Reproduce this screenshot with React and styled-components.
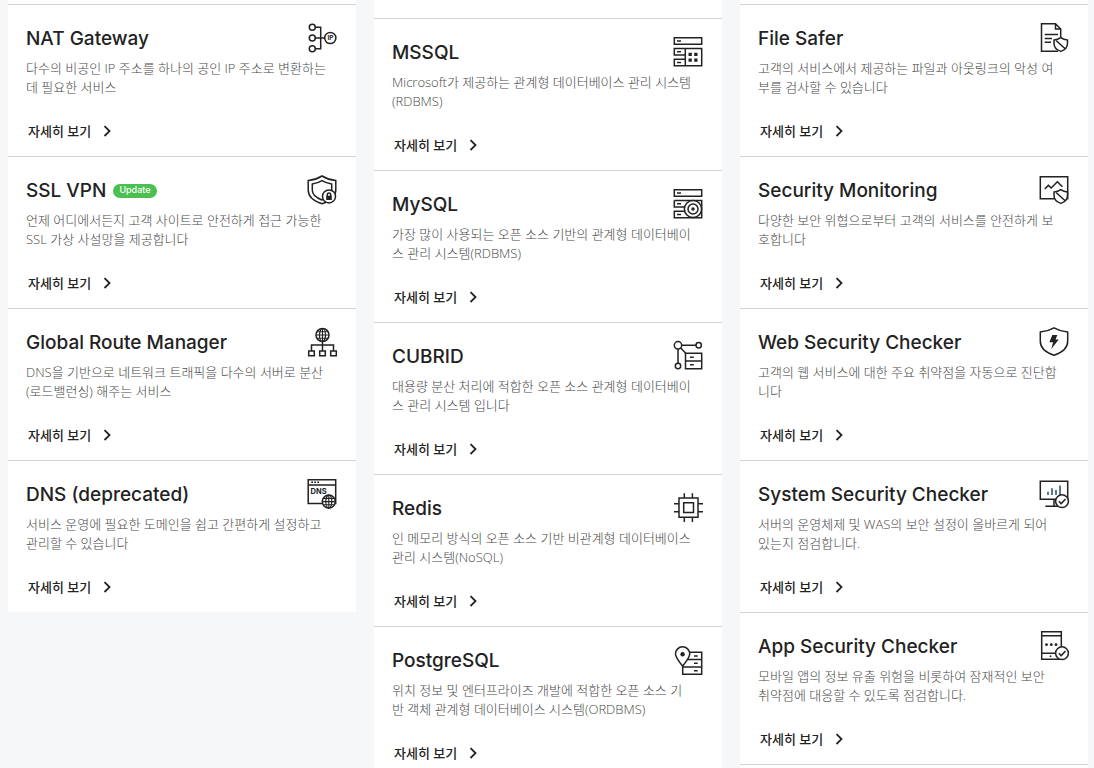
import React from 'react';
import styled, { createGlobalStyle } from 'styled-components';

const GlobalStyle = createGlobalStyle`
    * {
        box-sizing:border-box;
    }
    body {
        margin:0;
        background:#f6f7f9;
        color:#222;
        font-family:"Open Sans", "Noto Sans CJK KR", sans-serif;
    }
`;

const Page = styled.main`
    display:grid;
    grid-template-columns:repeat(3, minmax(0, 1fr));
    align-items:start;
    gap:18px;
    height:100vh;
    padding:0 6px 0 8px;
    overflow:hidden;
`;

const Column = styled.section`
    padding-top:${props => props.$top}px;
    background:#fff;
`;

const Card = styled.article`
    padding:18px 19px 15px 18px;
    border-top:1px solid #d5d5d5;
`;

const Header = styled.header`
    display:flex;
    justify-content:space-between;
    height:30px;
`;

const Heading = styled.div`
    display:flex;
    align-items:center;
    gap:7px;
    padding-top:2px;
`;

const Title = styled.h3`
    margin:0;
    font-family:Inter, "Noto Sans CJK KR", sans-serif;
    font-size:19px;
    font-weight:500;
    line-height:28px;
    white-space:nowrap;
`;

const Badge = styled.span`
    padding:0 6px 2px;
    border-radius:7px;
    background:#4bbf4f;
    color:#fff;
    font-family:Inter, sans-serif;
    font-size:9px;
    font-weight:500;
    line-height:12px;
`;

const Overview = styled.p`
    margin:6px 0 24px;
    color:#484848;
    font-size:13px;
    font-weight:300;
    line-height:19px;
    white-space:pre;
`;

const More = styled.a`
    display:inline-flex;
    align-items:center;
    gap:12px;
    height:20px;
    padding-left:2px;
    color:#222;
    font-size:13px;
    font-weight:500;
    line-height:20px;
    text-decoration:none;
    vertical-align:top;
`;

const Footer = styled.div`
    height:20px;
`;

// closes a column whose list goes on below the window
const NextCard = styled.div`
    height:18px;
    border-top:1px solid #d5d5d5;
`;

const Svg = styled.svg`
    flex:none;
    width:30px;
    height:30px;
    overflow:visible;
    fill:none;
    stroke:#222;
    stroke-width:1.5;

    .solid {
        fill:#222;
        stroke:none;
    }
    .paper {
        fill:#fff;
    }
    text {
        fill:#222;
        stroke:none;
        font-family:Inter, sans-serif;
        font-weight:700;
    }
`;

const Arrow = styled.svg`
    width:8px;
    height:12px;
    fill:none;
    stroke:#222;
    stroke-width:1.8;
`;

const Globe = ({ x, y }) => (
    <g transform={`translate(${x} ${y})`}>
        <circle className="paper" r="6.5" />
        <ellipse rx="3" ry="6.5" strokeWidth="1.2" />
        <path d="M0-6.5v13M-6.5 0h13M-5.6-3.2H5.6M-5.6 3.2H5.6" strokeWidth="1.1" />
    </g>
);

const Check = () => (
    <>
        <circle className="paper" cx="23" cy="22.2" r="6.4" />
        <path d="m19.8 22.2 2.4 2.4 4.3-4.5" />
    </>
);

const SmallShield = () => (
    <>
        <path className="paper" d="M21.8 14.6c2 1.5 4.2 2.3 6.7 2.5v3.2c0 4-2.6 6.7-6.7 8.1-4.2-1.4-6.8-4.1-6.8-8.1v-3.2c2.6-.2 4.8-1 6.8-2.5z" />
        <path d="m17 17.5 9.2 8.3" />
    </>
);

const icons = {
    nat: (
        <>
            <path d="M8.3 4.3h5.4v21.4H8.3M8.3 15H18" />
            <circle cx="5.3" cy="4.3" r="3" />
            <circle cx="5.3" cy="15" r="3" />
            <circle cx="5.3" cy="25.7" r="3" />
            <circle cx="23.3" cy="15" r="5.6" />
            <text x="23.4" y="17.3" fontSize="6.5" textAnchor="middle">IP</text>
        </>
    ),
    vpn: (
        <>
            <path d="M15 1c4.2 2.6 8.8 4.1 13.8 4.6V15c0 6.6-5.2 11-13.8 13.7C6.4 26 1.2 21.6 1.2 15V5.6C6.2 5.1 10.8 3.6 15 1z" />
            <path d="M15 5.6c3 1.8 6.2 2.9 9.7 3.5v6.2c0 4.2-3.4 7.3-9.7 9.7-6.3-2.4-9.7-5.5-9.7-9.7V9.1C8.8 8.5 12 7.4 15 5.6z" />
            <circle className="paper" cx="22" cy="21.4" r="6.5" />
            <rect className="solid" x="19.2" y="20.7" width="5.6" height="4.3" />
            <path d="M20.3 21v-1.4a1.7 1.7 0 0 1 3.4 0V21" />
        </>
    ),
    route: (
        <>
            <path d="M15.5 14.5V24M4.5 24v-6h22v6" />
            <Globe x={15.5} y={8} />
            <path d="M1.7 24h5.6v4.7H1.7zM12.7 24h5.6v4.7h-5.6zM23.7 24h5.6v4.7h-5.6z" />
        </>
    ),
    dns: (
        <>
            <path d="M1.2.7h27.5v23.8H1.2zM1.2 6h27.5" />
            <path d="M4.3 3.3H6M7.3 3.3H9M10.3 3.3H12" />
            <text x="3.6" y="14.8" fontSize="7.5">DNS</text>
            <Globe x={21.8} y={22.6} />
        </>
    ),
    mssql: (
        <>
            <path d="M1.3.8h27.4v6.5H1.3zM12.3 11.5H1.3V18h11M12.3 22.3H1.3v6.4h11M12.3 11.5h16.4v17.2H12.3z" />
            <path d="M4 4.1h4M4 14.8h4M4 25.5h4" />
            <path className="solid" d="M15.5 15.7h3.3V19h-3.3zM21.2 15.7h3.3V19h-3.3zM15.5 21.5h3.3v3.3h-3.3zM21.2 21.5h3.3v3.3h-3.3z" />
        </>
    ),
    mysql: (
        <>
            <path d="M1.3.8h27.4v6.5H1.3zM1.3 11.5h27.4v17.2H1.3v-6.4h11M1.3 11.5V18h11" />
            <path d="M4 4.1h4M4 14.8h4M4 25.5h4" />
            <circle className="paper" cx="20" cy="20" r="8.6" />
            <circle cx="20" cy="20" r="5" />
            <circle className="solid" cx="20" cy="20" r="1.7" />
        </>
    ),
    cubrid: (
        <>
            <path d="M8.8 4.3H23M5 8v14.3M7.7 7l5 5.3" />
            <circle cx="5" cy="4.3" r="3.7" />
            <circle cx="25.7" cy="4.3" r="2.7" />
            <circle cx="5" cy="25" r="2.7" />
            <path d="M12.5 12.3h16.2v15.4H12.5zM12.5 20h16.2M17 16.2h3.7M17 23.8h3.7" />
        </>
    ),
    redis: (
        <>
            <path d="M6 5h19v19.3H6zM10.7 9.7h9.8v9.8h-9.8z" />
            <path d="M11.3.3V5M19.4.3V5M11.3 24.3V29M19.4 24.3V29M1 10.7h5M1 18.8h5M25 10.7h5M25 18.8h5" />
        </>
    ),
    postgres: (
        <>
            <path d="M14 7.2h14.7v22.1h-19V14.5h19M9.7 22h19M21 11h3.7M21 18.3h3.7M21 25.7h3.7" />
            <path className="paper" d="M9.6 21C5.8 16.3 2.5 12.3 2.5 8.9a7.1 7.1 0 0 1 14.2 0c0 3.4-3.3 7.4-7.1 12.1z" />
            <circle className="solid" cx="9.6" cy="9.2" r="2.2" />
        </>
    ),
    file: (
        <>
            <path d="M21.7 16V6L16.5.8h-14v27.5H19M16.5.8V6h5.2" />
            <path d="M5.7 11.4H19M5.7 15.4H13M5.7 19.3H12" />
            <SmallShield />
        </>
    ),
    monitoring: (
        <>
            <path d="M1.3 1.8h27.4v22H1.3z" />
            <path d="m5.7 14 3.7-3.6 2.8 2.6 6.1-6.2 5.2 5" />
            <SmallShield />
        </>
    ),
    web: (
        <>
            <path d="M15 .9c4.2 2.4 8.7 3.8 13.7 4.2v9.2c0 6.5-5.2 11.2-13.7 13.9C6.5 25.5 1.3 20.8 1.3 14.3V5.1C6.3 4.7 10.8 3.3 15 .9z" />
            <path className="solid" d="M13.3 8h5l-1.7 4.5h3.2L12.3 22l1.8-6.7h-3.7z" />
        </>
    ),
    system: (
        <>
            <path d="M1.3 2.2h27.4v18H1.3zM15 20.2v7M6.3 27.3H20" />
            <path d="M9 12.7V16M13 9.3V16M17 11V16M21 6.5V16" stroke="#244d66" />
            <Check />
        </>
    ),
    app: (
        <>
            <path d="M2.7.8h19.6V28.3H2.7zM2.7 4.8h19.6M2.7 22.2h19.6" />
            <circle className="solid" cx="7.5" cy="13.7" r="1.4" />
            <circle className="solid" cx="12.3" cy="13.7" r="1.4" />
            <circle className="solid" cx="17" cy="13.7" r="1.4" />
            <circle className="solid" cx="11.5" cy="25.2" r=".9" />
            <Check />
        </>
    ),
};

const network = [
    { icon: 'nat', title: 'NAT Gateway', overview: '다수의 비공인 IP 주소를 하나의 공인 IP 주소로 변환하는\n데 필요한 서비스' },
    { icon: 'vpn', title: 'SSL VPN', badge: 'Update', overview: '언제 어디에서든지 고객 사이트로 안전하게 접근 가능한\nSSL 가상 사설망을 제공합니다' },
    { icon: 'route', title: 'Global Route Manager', overview: 'DNS을 기반으로 네트워크 트래픽을 다수의 서버로 분산\n(로드밸런싱) 해주는 서비스' },
    { icon: 'dns', title: 'DNS (deprecated)', overview: '서비스 운영에 필요한 도메인을 쉽고 간편하게 설정하고\n관리할 수 있습니다' },
];

const database = [
    { icon: 'mssql', title: 'MSSQL', overview: 'Microsoft가 제공하는 관계형 데이터베이스 관리 시스템\n(RDBMS)' },
    { icon: 'mysql', title: 'MySQL', overview: '가장 많이 사용되는 오픈 소스 기반의 관계형 데이터베이\n스 관리 시스템(RDBMS)' },
    { icon: 'cubrid', title: 'CUBRID', overview: '대용량 분산 처리에 적합한 오픈 소스 관계형 데이터베이\n스 관리 시스템 입니다' },
    { icon: 'redis', title: 'Redis', overview: '인 메모리 방식의 오픈 소스 기반 비관계형 데이터베이스\n관리 시스템(NoSQL)' },
    { icon: 'postgres', title: 'PostgreSQL', overview: '위치 정보 및 엔터프라이즈 개발에 적합한 오픈 소스 기\n반 객체 관계형 데이터베이스 시스템(ORDBMS)' },
];

const security = [
    { icon: 'file', title: 'File Safer', overview: '고객의 서비스에서 제공하는 파일과 아웃링크의 악성 여\n부를 검사할 수 있습니다' },
    { icon: 'monitoring', title: 'Security Monitoring', overview: '다양한 보안 위협으로부터 고객의 서비스를 안전하게 보\n호합니다' },
    { icon: 'web', title: 'Web Security Checker', overview: '고객의 웹 서비스에 대한 주요 취약점을 자동으로 진단합\n니다' },
    { icon: 'system', title: 'System Security Checker', overview: '서버의 운영체제 및 WAS의 보안 설정이 올바르게 되어\n있는지 점검합니다.' },
    { icon: 'app', title: 'App Security Checker', overview: '모바일 앱의 정보 유출 위험을 비롯하여 잠재적인 보안\n취약점에 대응할 수 있도록 점검합니다.' },
];

const Product = ({ icon, title, badge, overview }) => (
    <Card>
        <Header>
            <Heading>
                <Title>{title}</Title>
                {badge && <Badge>{badge}</Badge>}
            </Heading>
            <Svg viewBox="0 0 30 30" aria-hidden="true">{icons[icon]}</Svg>
        </Header>
        <Overview>{overview}</Overview>
        <Footer>
            <More href={`#${icon}`}>
                자세히 보기
                <Arrow viewBox="0 0 8 12" aria-hidden="true">
                    <path d="m1.5 1.2 5 4.9-5 4.9" />
                </Arrow>
            </More>
        </Footer>
    </Card>
);

const App = () => (
    <>
        <GlobalStyle />
        <Page>
            <Column $top={4}>
                {network.map(item => <Product key={item.icon} {...item} />)}
            </Column>
            <Column $top={18}>
                {database.map(item => <Product key={item.icon} {...item} />)}
            </Column>
            <Column $top={4}>
                {security.map(item => <Product key={item.icon} {...item} />)}
                <NextCard />
            </Column>
        </Page>
    </>
);

export default App;
